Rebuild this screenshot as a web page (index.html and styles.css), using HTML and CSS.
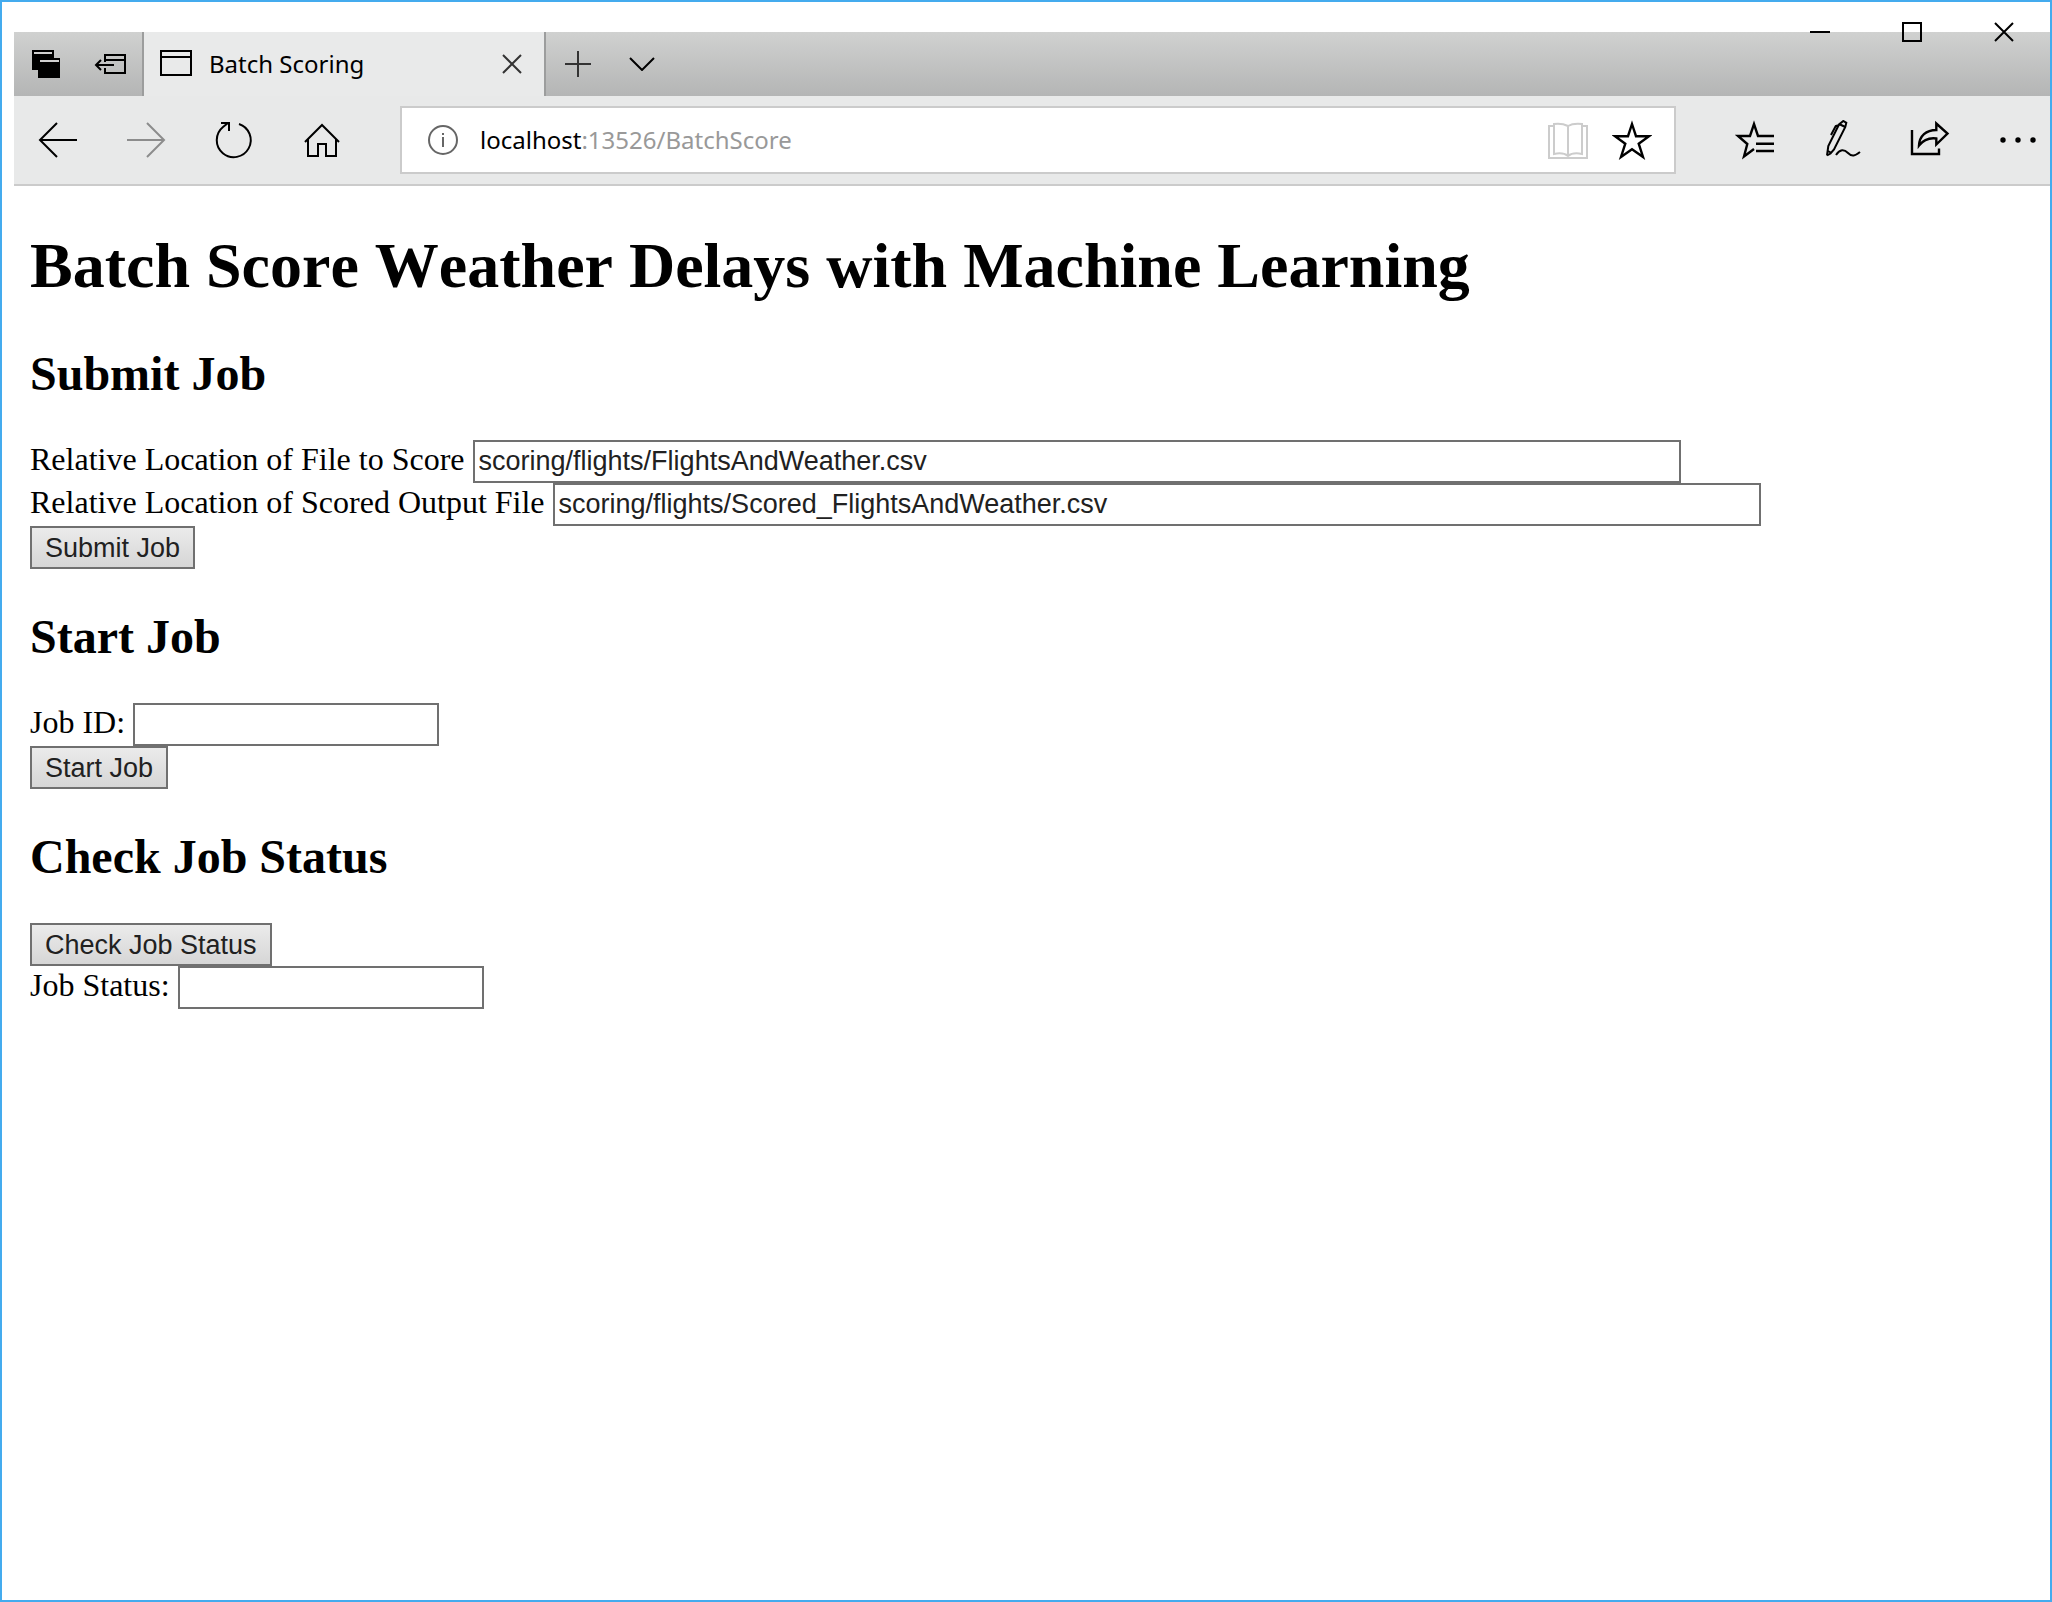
FILE: index.html
```html
<!DOCTYPE html>
<html lang="en">
<head>
<meta charset="utf-8">
<title>Batch Scoring</title>
<link rel="stylesheet" href="styles.css">
</head>
<body>
<div class="window">
  <div class="window-controls">
    <button class="window-button" aria-label="Minimize"><svg width="20" height="20"><path d="M0 10H20"/></svg></button>
    <button class="window-button" aria-label="Maximize"><svg width="20" height="20"><path d="M1 1H19V19H1Z"/></svg></button>
    <button class="window-button" aria-label="Close"><svg width="20" height="20"><path d="M1 1L19 19M19 1L1 19"/></svg></button>
  </div>

  <header class="chrome">
    <div class="tab-bar">
      <div class="tab-tools">
        <button class="tab-button" aria-label="Tabs you've set aside">
          <svg width="40" height="40"><path class="solid" d="M6 6H28V14H34V34H12V26H6Z"/><path class="strip" d="M8 9H26M14 17H33"/></svg>
        </button>
        <button class="tab-button" aria-label="Set these tabs aside">
          <svg width="40" height="40"><path d="M15 18V11H35V29H15V24M15 16H35M6 21H24"/><path d="M11 16L6 21L11 26"/></svg>
        </button>
      </div>
      <div class="tab">
        <svg width="32" height="28"><path d="M1 1H31V25H1ZM1 7H31"/></svg>
        <span class="tab-title">Batch Scoring</span>
        <button class="tab-close" aria-label="Close tab"><svg class="gray" width="20" height="20"><path d="M1 1L19 19M19 1L1 19"/></svg></button>
      </div>
      <button class="tab-button" aria-label="New tab"><svg class="gray" width="26" height="26"><path d="M13 0V26M0 13H26"/></svg></button>
      <button class="tab-button" aria-label="Tab previews"><svg width="26" height="14"><path d="M1 1L13 13L25 1"/></svg></button>
    </div>

    <nav class="toolbar">
      <button class="nav-button" aria-label="Back"><svg width="40" height="40"><path d="M19 3L2 20L19 37M2 20H39"/></svg></button>
      <button class="nav-button" aria-label="Forward" disabled><svg class="disabled" width="40" height="40"><path d="M21 3L38 20L21 37M38 20H1"/></svg></button>
      <button class="nav-button" aria-label="Refresh"><svg width="40" height="40"><path d="M25 4A17 17 0 1 1 9 7L14 3"/><path d="M7 3H15V11"/></svg></button>
      <button class="nav-button" aria-label="Home"><svg width="40" height="40"><path d="M3 22L20 5L37 22M6 19V36H16V24H24V36H34V19"/></svg></button>

      <div class="address">
        <svg class="info" width="30" height="30"><circle cx="15" cy="15" r="14"/><path d="M15 12V22M15 8V10"/></svg>
        <div class="url" role="textbox" aria-label="Address" contenteditable="true" spellcheck="false">localhost<span class="url-path">:13526/BatchScore</span></div>
        <div class="address-actions">
          <button class="address-button" aria-label="Reading view"><svg class="faint" width="40" height="40"><path d="M6 6H1V38H39V6H34M20 6Q14 3 6 4V34Q15 32 20 36Q25 32 34 34V4Q25 3 20 6V36"/></svg></button>
          <button class="address-button" aria-label="Add to favorites"><svg class="bold" width="40" height="40"><path d="M20 4L24 16.2H37L26.7 23.7L31 37L20 29.3L9 37L13.3 23.7L3 16.2H16Z"/></svg></button>
        </div>
      </div>

      <button class="nav-button" aria-label="Hub"><svg class="bold" width="40" height="40"><path d="M40 16H24L20 4L16 16H4L13.3 24L10 36.5L20 29M22 23.7H40M22 31H40"/></svg></button>
      <button class="nav-button" aria-label="Web note"><svg width="40" height="40"><path d="M5 35.5L6.3 26L17 4.5L21.3 1L24.3 2.8L23.3 7L12 29.5L8.5 33.5L5 35.5M17 4L23.3 7M17 5L13.7 6L9 15M6 31L9.5 33M14 35C18 29 22 29 26 33S33 36 38 32"/></svg></button>
      <button class="nav-button" aria-label="Share"><svg class="bold" width="40" height="40"><path d="M2 10V34H29V28.5M9 25.5C9.5 16 16 10 26.3 10V3.5L37.5 13.5L26.3 24.5V18.5C19 17.5 13 20.5 9 25.5Z"/></svg></button>
      <button class="more-button" aria-label="More"><svg width="40" height="40"><g class="solid"><circle cx="5" cy="20" r="2.7"/><circle cx="20" cy="20" r="2.7"/><circle cx="35" cy="20" r="2.7"/></g></svg></button>
    </nav>
  </header>

  <main class="page">
    <h1>Batch Score Weather Delays with Machine Learning</h1>

    <h2>Submit Job</h2>
    <div class="row">
      <label for="input-file">Relative Location of File to Score</label>
      <input class="path-field" id="input-file" type="text" value="scoring/flights/FlightsAndWeather.csv">
    </div>
    <div class="row">
      <label for="output-file">Relative Location of Scored Output File</label>
      <input class="path-field" id="output-file" type="text" value="scoring/flights/Scored_FlightsAndWeather.csv">
    </div>
    <div class="row"><button class="action" type="button">Submit Job</button></div>

    <h2>Start Job</h2>
    <div class="row">
      <label for="job-id">Job ID:</label>
      <input class="short-field" id="job-id" type="text">
    </div>
    <div class="row"><button class="action" type="button">Start Job</button></div>

    <h2>Check Job Status</h2>
    <div class="row"><button class="action" type="button">Check Job Status</button></div>
    <div class="row">
      <label for="job-status">Job Status:</label>
      <input class="short-field" id="job-status" type="text">
    </div>
  </main>
</div>
</body>
</html>
```
FILE: styles.css
```css
*,
*::before,
*::after {
  box-sizing: border-box;
}

body {
  margin: 0;
  background: #fff;
  color: #000;
}

button {
  margin: 0;
  padding: 0;
  border: 0;
  background: none;
}

svg {
  display: block;
  flex: none;
  fill: none;
  stroke: #000;
  stroke-width: 2;
}

.solid {
  fill: #000;
  stroke: none;
}

.strip {
  stroke: #d0d0d0;
}

.bold {
  stroke-width: 2.4;
}

.gray {
  stroke: #333;
}

.disabled {
  stroke: #8c8c8c;
}

.faint {
  stroke: #ccc;
}

.window {
  position: relative;
  min-height: 100vh;
  padding-top: 30px;
  border: 2px solid #44abee;
}

/* Caption buttons float over the top edge of the tab strip */
.window-controls {
  position: absolute;
  top: 0;
  right: 0;
  display: flex;
}

.window-button {
  display: flex;
  align-items: center;
  justify-content: center;
  width: 92px;
  height: 60px;
}

.chrome {
  margin-left: 12px;
}

.tab-bar {
  display: flex;
  height: 64px;
  background: linear-gradient(#d0d1d0, #b4b5b5);
}

.tab-tools {
  display: flex;
  border-right: 2px solid #9c9d9d;
}

.tab-button {
  display: flex;
  align-items: center;
  justify-content: center;
  width: 64px;
}

.tab {
  display: flex;
  align-items: center;
  width: 402px;
  padding: 0 22px 0 16px;
  border-right: 2px solid #9c9d9d;
  background: #e9eaea;
}

.tab-title {
  flex: 1;
  padding-left: 17px;
  font: 24px/32px "Noto Sans", sans-serif;
}

.toolbar {
  display: flex;
  align-items: center;
  height: 90px;
  border-bottom: 2px solid #cbcbcb;
  background: #e8e9e9;
}

.nav-button {
  display: flex;
  align-items: center;
  justify-content: center;
  width: 88px;
  height: 88px;
}

/* The last button runs up to the window edge */
.more-button {
  display: flex;
  align-items: center;
  width: 76px;
  height: 88px;
  padding-left: 24px;
}

.address {
  display: flex;
  flex: 1;
  align-items: center;
  height: 68px;
  margin: 0 34px;
  padding: 0 22px 0 26px;
  border: 2px solid #cbcbcb;
  background: #fff;
}

.info {
  stroke: #666;
}

.url {
  flex: 1;
  padding-left: 22px;
  font: 24px/32px "Noto Sans", sans-serif;
  white-space: nowrap;
}

.url-path {
  color: #999;
}

.address-actions {
  display: flex;
  gap: 24px;
}

.page {
  padding: 43px 28px;
  font: 32px/36px "Liberation Serif", serif;
}

h1 {
  margin: 0 0 45px;
  font-size: 64px;
  line-height: 73px;
  font-kerning: none;
}

h2 {
  margin: 41px 0 39px;
  font-size: 48px;
  line-height: 54px;
}

.row {
  display: flex;
  align-items: baseline;
  gap: 8px;
}

.path-field,
.short-field,
.action {
  height: 43px;
  border: 2px solid #707070;
  border-radius: 0;
  color: #212121;
  font: 27px/32px "Liberation Sans", sans-serif;
}

.path-field,
.short-field {
  padding: 0 4px;
  background: #fff;
}

.path-field {
  width: 1208px;
}

.short-field {
  width: 306px;
}

.action {
  padding: 0 13px;
  background: linear-gradient(#ebebeb, #d6d6d6);
}
```
